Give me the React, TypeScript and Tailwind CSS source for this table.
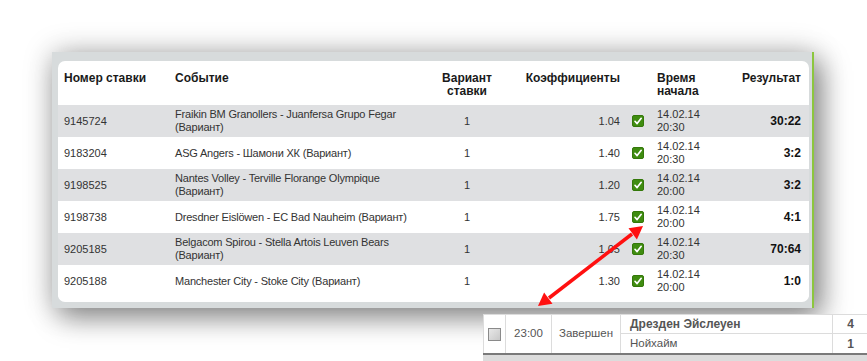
import React from "react";

type Bet = {
  id: string;
  event: string[];
  variant: string;
  odds: string;
  date: string;
  time: string;
  result: string;
};

const bets: Bet[] = [
  { id: "9145724", event: ["Fraikin BM Granollers - Juanfersa Grupo Fegar", "(Вариант)"], variant: "1", odds: "1.04", date: "14.02.14", time: "20:30", result: "30:22" },
  { id: "9183204", event: ["ASG Angers - Шамони ХК (Вариант)"], variant: "1", odds: "1.40", date: "14.02.14", time: "20:30", result: "3:2" },
  { id: "9198525", event: ["Nantes Volley - Terville Florange Olympique", "(Вариант)"], variant: "1", odds: "1.20", date: "14.02.14", time: "20:00", result: "3:2" },
  { id: "9198738", event: ["Dresdner Eislöwen - EC Bad Nauheim (Вариант)"], variant: "1", odds: "1.75", date: "14.02.14", time: "20:00", result: "4:1" },
  { id: "9205185", event: ["Belgacom Spirou - Stella Artois Leuven Bears", "(Вариант)"], variant: "1", odds: "1.05", date: "14.02.14", time: "20:30", result: "70:64" },
  { id: "9205188", event: ["Manchester City - Stoke City (Вариант)"], variant: "1", odds: "1.30", date: "14.02.14", time: "20:00", result: "1:0" },
];

const cols = "grid grid-cols-[111px_261px_74px_122px_25px_79px_1fr]";

const CheckIcon = () => (
  <svg width="12" height="12" viewBox="0 0 12 12" className="block">
    <rect x="0.5" y="0.5" width="11" height="11" rx="1.5" fill="#3f8c10" stroke="#34780a" />
    <path d="M3 6.3 L5.1 8.6 L9.2 3.3" fill="none" stroke="#ffffff" strokeWidth="1.7" strokeLinecap="round" strokeLinejoin="round" />
  </svg>
);

// red double-headed arrow drawn over the screenshot
const Arrow = () => (
  <svg width="867" height="361" className="absolute left-0 top-0 pointer-events-none">
    <line x1="549" y1="298" x2="632" y2="234" stroke="#ff1010" strokeWidth="3.5" />
    <polygon points="643,226 636.9,239.5 628.5,228.3" fill="#ff1010" />
    <polygon points="538,306 552.5,303.7 544.1,292.5" fill="#ff1010" />
  </svg>
);

const App: React.FC = () => {
  return (
    <div className="relative w-[867px] h-[361px] overflow-hidden bg-white font-['Liberation_Sans',Arial,sans-serif]">
      <div className="pt-[52px] pl-[52px]">
        {/* panel */}
        <div className="w-[762px] bg-[#d7dbdc] pt-[9px] pl-[6px] pr-[3px] pb-[6px] border-r-2 border-[#8cc63e] shadow-[0_0_28px_rgba(0,0,0,0.22),8px_10px_26px_rgba(0,0,0,0.4)]">
          <div className="bg-white rounded-[7px] pb-[5px] overflow-hidden">
            <div className={`${cols} h-[44px] pt-[11px] text-[12px] leading-[13px] font-bold text-[#1a1a1a]`}>
              <div className="pl-[6px]">Номер ставки</div>
              <div className="pl-[6px]">Событие</div>
              <div className="text-center">Вариант<br />ставки</div>
              <div className="text-right pr-[6px]">Коэффициенты</div>
              <div />
              <div className="pl-[6px]">Время<br />начала</div>
              <div className="text-right pr-[8px]">Результат</div>
            </div>
            {bets.map((b, i) => (
              <div
                key={b.id}
                className={`${cols} h-[32px] items-center text-[11px] leading-[13px] text-[#333] ${i % 2 === 0 ? "bg-[#dfe0e2]" : "bg-white"}`}
              >
                <div className="pl-[6px]">{b.id}</div>
                <div className="pl-[6px] tracking-[-0.2px]">
                  {b.event.map((line) => (
                    <div key={line} className="whitespace-nowrap">{line}</div>
                  ))}
                </div>
                <div className="text-center">{b.variant}</div>
                <div className="text-right pr-[6px]">{b.odds}</div>
                <div className="pl-[6px]"><CheckIcon /></div>
                <div className="pl-[6px]">
                  <div>{b.date}</div>
                  <div>{b.time}</div>
                </div>
                <div className="text-right pr-[8px] text-[12px] font-bold text-[#111]">{b.result}</div>
              </div>
            ))}
          </div>
        </div>
      </div>

      {/* inset from another page */}
      <div className="absolute left-[483px] top-[314px] w-[384px] bg-white">
        <div className="grid grid-cols-[22px_46px_69px_212px_35px] grid-rows-[19px_19px] border-t border-l border-[#dcdcdc] text-[#555] text-[11.5px]">
          <div className="row-span-2 flex items-center justify-center border-r border-[#dcdcdc]">
            <div className="w-[13px] h-[13px] border border-[#8a8a8a] bg-gradient-to-br from-[#e8e8e8] to-[#c8c8c8]" />
          </div>
          <div className="row-span-2 flex items-center justify-center border-r border-[#dcdcdc]">23:00</div>
          <div className="row-span-2 flex items-center justify-center border-r border-[#dcdcdc]">Завершен</div>
          <div className="flex items-center pl-[9px] border-r border-b border-[#dcdcdc] font-bold text-[12px]">Дрезден Эйслеуен</div>
          <div className="flex items-center justify-center border-b border-[#dcdcdc] font-bold text-[12px]">4</div>
          <div className="flex items-center pl-[9px] border-r border-[#dcdcdc]">Нойхайм</div>
          <div className="flex items-center justify-center font-bold text-[12px]">1</div>
        </div>
        <div className="h-[2px] bg-[#7a7a7a]" />
        <div className="h-[8px] bg-[#dcdcdc]" />
      </div>

      <Arrow />
    </div>
  );
};

export default App;
